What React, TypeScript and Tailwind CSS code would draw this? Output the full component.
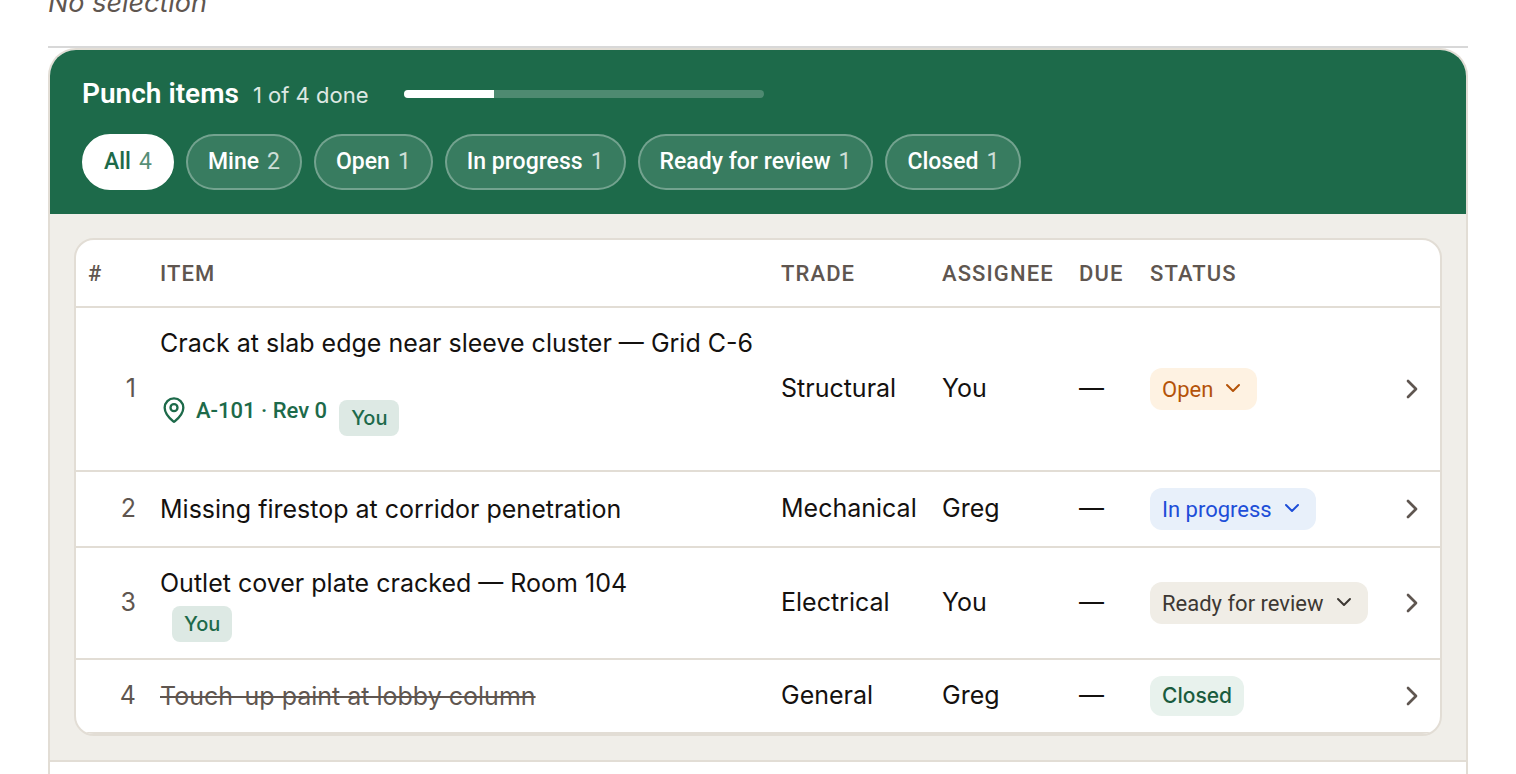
import { useState } from "react";
import { ChevronDown, ChevronRight, MapPin } from "lucide-react";
import clsx from "clsx";

type Status = "open" | "in_progress" | "review" | "closed";

interface PunchItem {
    id: number;
    title: string;
    trade: string;
    assignee: string;
    due?: string;
    status: Status;
    sheet?: string;
}

const STATUS_LABEL: Record<Status, string> = {
    open: "Open",
    in_progress: "In progress",
    review: "Ready for review",
    closed: "Closed",
};

const STATUS_STYLE: Record<Status, string> = {
    open: "bg-[#fef2e2] text-[#b45309]",
    in_progress: "bg-[#e8f0fa] text-[#1d4ed8]",
    review: "bg-[#f0ede6] text-[#3d3833]",
    closed: "bg-[#e8f2ed] text-[#1a5c3e]",
};

const INITIAL_ITEMS: PunchItem[] = [
    { id: 1, title: "Crack at slab edge near sleeve cluster — Grid C-6", trade: "Structural", assignee: "You", status: "open", sheet: "A-101 · Rev 0" },
    { id: 2, title: "Missing firestop at corridor penetration", trade: "Mechanical", assignee: "Greg", status: "in_progress" },
    { id: 3, title: "Outlet cover plate cracked — Room 104", trade: "Electrical", assignee: "You", status: "review" },
    { id: 4, title: "Touch-up paint at lobby column", trade: "General", assignee: "Greg", status: "closed" },
];

type Filter = "all" | "mine" | Status;

const FILTERS: { key: Filter; label: string }[] = [
    { key: "all", label: "All" },
    { key: "mine", label: "Mine" },
    { key: "open", label: "Open" },
    { key: "in_progress", label: "In progress" },
    { key: "review", label: "Ready for review" },
    { key: "closed", label: "Closed" },
];

const matches = (item: PunchItem, filter: Filter) => {
    if (filter === "all") return true;
    if (filter === "mine") return item.assignee === "You";
    return item.status === filter;
};

function YouBadge({ className }: { className?: string }) {
    return (
        <span className={clsx("inline-flex h-9 items-center rounded-lg bg-[#dde9e4] px-3 text-xl font-medium text-[#1d6a4a]", className)}>
            You
        </span>
    );
}

function StatusCell({ item, onChange }: { item: PunchItem; onChange: (s: Status) => void }) {
    if (item.status === "closed") {
        return (
            <span className={clsx("flex h-10 w-fit items-center rounded-xl px-3 text-[21px] font-medium", STATUS_STYLE.closed)}>
                Closed
            </span>
        );
    }

    return (
        <div className={clsx("relative w-fit rounded-xl", STATUS_STYLE[item.status])}>
            <select
                aria-label={`Status of item ${item.id}`}
                value={item.status}
                onChange={(e) => onChange(e.target.value as Status)}
                className="field-sizing-content block h-[42px] appearance-none bg-transparent pr-11 pl-3 font-['Roboto',sans-serif] text-[22px]"
            >
                {(Object.keys(STATUS_LABEL) as Status[]).map((s) => (
                    <option key={s} value={s}>
                        {STATUS_LABEL[s]}
                    </option>
                ))}
            </select>
            <ChevronDown size={24} className="pointer-events-none absolute top-2 right-3" />
        </div>
    );
}

export default function App() {
    const [items, setItems] = useState(INITIAL_ITEMS);
    const [filter, setFilter] = useState<Filter>("all");

    const done = items.filter((i) => i.status === "closed").length;
    const visible = items.filter((i) => matches(i, filter));

    const setStatus = (id: number, status: Status) => {
        setItems(items.map((i) => (i.id === id ? { ...i, status } : i)));
    };

    return (
        <main className="flex h-screen flex-col overflow-hidden bg-white px-12 font-['Inter',sans-serif] text-[25px] text-[#14110f]">
            <p className="-mt-[17px] border-b-2 border-[#d8d8d8] pb-6 text-[27px] leading-[39px] text-[#5f5650] italic">No selection</p>

            <section className="flex flex-1 flex-col overflow-hidden rounded-t-[28px] border-2 border-b-0 border-[#e2ddd5]">
                <header className="flex flex-col gap-5 bg-[#1d6a4a] px-8 py-6 text-white">
                    <div className="flex h-10 items-center">
                        <div className="flex items-baseline gap-3.5">
                            <h2 className="font-['Roboto',sans-serif] text-[28px] font-semibold">Punch items</h2>
                            <span className="text-[22px] text-white/85">{done} of {items.length} done</span>
                        </div>
                        <div
                            role="progressbar"
                            aria-label="Punch items done"
                            aria-valuenow={done}
                            aria-valuemax={items.length}
                            className="ml-9 h-2 w-[360px] overflow-hidden rounded bg-white/22"
                        >
                            <div className="h-full bg-white" style={{ width: `${(done / items.length) * 100}%` }} />
                        </div>
                    </div>

                    <div className="flex gap-3 font-['Roboto',sans-serif] text-[23px] font-medium">
                        {FILTERS.map(({ key, label }) => (
                            <button
                                key={key}
                                type="button"
                                aria-pressed={filter === key}
                                onClick={() => setFilter(key)}
                                className={clsx(
                                    "flex h-14 items-center gap-2 rounded-full border-2 px-5 whitespace-nowrap",
                                    filter === key ? "border-white bg-white text-[#1d6a4a]" : "border-white/30 bg-white/12"
                                )}
                            >
                                {label}
                                <span className="font-normal opacity-75">{items.filter((i) => matches(i, key)).length}</span>
                            </button>
                        ))}
                    </div>
                </header>

                <div className="bg-[#f0eee9] p-6">
                    <div className="overflow-hidden rounded-[20px] border-2 border-[#e2ddd5] bg-white">
                        <table className="w-full table-fixed text-left">
                            <colgroup>
                                <col className="w-[72px]" />
                                <col />
                                <col className="w-[161px]" />
                                <col className="w-[137px]" />
                                <col className="w-[71px]" />
                                <col className="w-[246px]" />
                                <col className="w-14" />
                            </colgroup>
                            <thead>
                                <tr className="h-[67px] border-b-2 border-[#e2ddd5] font-['Roboto',sans-serif] text-[22px] tracking-wider text-[#5f5650] uppercase [&>th]:px-3 [&>th]:font-medium">
                                    <th>#</th>
                                    <th>Item</th>
                                    <th>Trade</th>
                                    <th>Assignee</th>
                                    <th>Due</th>
                                    <th>Status</th>
                                    <th aria-label="Details" />
                                </tr>
                            </thead>
                            <tbody>
                                {visible.map((item) => (
                                    <tr key={item.id} className="border-b-2 border-[#e2ddd5] [&>td]:px-3 [&>td]:py-4">
                                        <td className="text-right text-[#5f5650]">{item.id}</td>
                                        <td>
                                            <div className={clsx("leading-[38px] whitespace-nowrap", item.status === "closed" && "text-[#5f5650] line-through")}>
                                                {item.title}
                                            </div>
                                            {item.sheet ? (
                                                <div className="flex items-start gap-3 pt-[34px] pb-[30px]">
                                                    <a href="#sheet" className="flex h-7 items-center gap-2 font-['Roboto',sans-serif] text-[22px] font-medium text-[#1d6a4a]">
                                                        <MapPin size={28} />
                                                        {item.sheet}
                                                    </a>
                                                    {item.assignee === "You" && <YouBadge className="mt-1 -mb-3" />}
                                                </div>
                                            ) : (
                                                item.assignee === "You" && <YouBadge className="mt-1 ml-3 align-top" />
                                            )}
                                        </td>
                                        <td>{item.trade}</td>
                                        <td>{item.assignee}</td>
                                        <td>{item.due ?? "—"}</td>
                                        <td>
                                            <StatusCell item={item} onChange={(s) => setStatus(item.id, s)} />
                                        </td>
                                        <td>
                                            <button type="button" aria-label={`Open item ${item.id}`} className="block text-[#5f5650]">
                                                <ChevronRight size={32} />
                                            </button>
                                        </td>
                                    </tr>
                                ))}
                            </tbody>
                        </table>
                    </div>
                </div>

                <footer className="flex-1 border-t-2 border-[#e2ddd5] bg-white" />
            </section>
        </main>
    );
}
